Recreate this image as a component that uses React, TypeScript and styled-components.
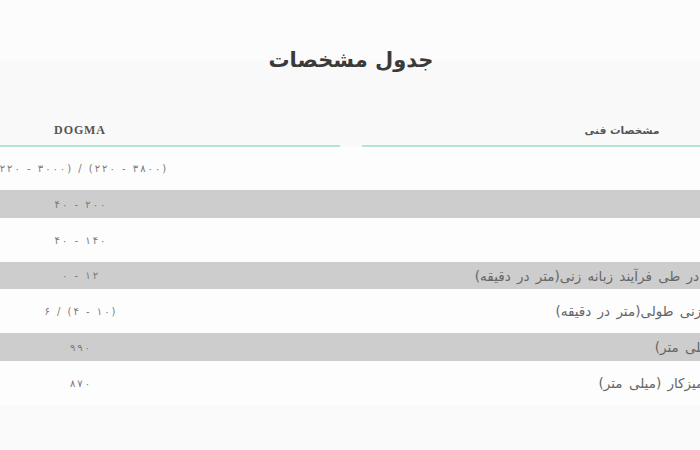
import React from "react";
import styled, { createGlobalStyle } from "styled-components";

const Global = createGlobalStyle`
  html, body {
    margin: 0;
    padding: 0;
    background: #fafafa;
    overflow: hidden;
  }
  body {
    font-family: "DejaVu Sans", "Noto Sans", sans-serif;
  }
`;

const Page = styled.div`
  width: 700px;
  height: 450px;
  overflow: hidden;
  background: linear-gradient(#fcfcfc 0, #fcfcfc 60px, #f9f9f9 61px, #fafafa 100%);
`;

const Sheet = styled.div`
  width: 1062px;
  margin-left: -180px;
  display: flex;
  flex-direction: column;
`;

const Title = styled.h2`
  margin: 45px 0 41px;
  height: 30px;
  line-height: 30px;
  text-align: center;
  direction: rtl;
  font-family: "DejaVu Sans", sans-serif;
  font-size: 21px;
  font-weight: 700;
  color: #3a3a3a;
`;

const Row = styled.div<{ $shade?: boolean; $h: number }>`
  display: grid;
  grid-template-columns: 520px 22px 520px;
  height: ${(p) => p.$h}px;
  align-items: center;
  background: ${(p) => (p.$shade ? "#cdcdcd" : "#fdfdfd")};
`;

const HeadRow = styled.div`
  display: grid;
  grid-template-columns: 520px 22px 520px;
  height: 31px;
`;

const HeadCell = styled.div<{ $serif?: boolean }>`
  border-bottom: 2px solid #b3e5cf;
  line-height: 29px;
  text-align: center;
  font-family: ${(p) =>
    p.$serif ? `"Liberation Serif", "DejaVu Serif", serif` : `"DejaVu Sans", sans-serif`};
  font-size: ${(p) => (p.$serif ? "12px" : "10.5px")};
  font-weight: 700;
  color: #555;
  direction: ${(p) => (p.$serif ? "ltr" : "rtl")};
  letter-spacing: ${(p) => (p.$serif ? "0.9px" : "0")};
`;

const Gap = styled.div``;

const Value = styled.div`
  text-align: center;
  direction: ltr;
  unicode-bidi: bidi-override;
  font-family: "DejaVu Sans", sans-serif;
  font-size: 10px;
  color: #7a7a7a;
  white-space: pre;
`;

const Label = styled.div`
  direction: rtl;
  text-align: right;
  padding-right: 102px;
  font-family: "DejaVu Sans", sans-serif;
  font-size: 13.5px;
  word-spacing: 2px;
  color: #666;
  white-space: nowrap;
`;

type Spec = { label: string; value: string; shade: boolean; h: number };

const specs: Spec[] = [
  { label: "توان (وات)", value: "(۲۲۰ - ۳۰۰۰) / (۲۲۰ - ۳۸۰۰)", shade: false, h: 43 },
  { label: "عمق شیار", value: "۴۰ - ۲۰۰", shade: true, h: 28 },
  { label: "عرض شیار", value: "۴۰ - ۱۴۰", shade: false, h: 44 },
  {
    label: "سرعت تغذیه در طی فرآیند زبانه زنی(متر در دقیقه)",
    value: "۰ - ۱۲",
    shade: true,
    h: 27,
  },
  {
    label: "سرعت شیار زنی طولی(متر در دقیقه)",
    value: "۶ / (۴ - ۱۰)",
    shade: false,
    h: 44,
  },
  { label: "ارتفاع کار (میلی متر)", value: "۹۹۰", shade: true, h: 28 },
  { label: "ارتفاع سطح میزکار (میلی متر)", value: "۸۷۰", shade: false, h: 44 },
];

// Persian digits belong to a cursive script, so letter-spacing is not applied;
// spread them with thin spaces instead.
const spread = (v: string) => v.split("").join("\u2009");

export default function App() {
  return (
    <Page>
      <Global />
      <Sheet>
        <Title>جدول مشخصات</Title>
        <HeadRow>
          <HeadCell $serif>DOGMA</HeadCell>
          <Gap />
          <HeadCell>مشخصات فنی</HeadCell>
        </HeadRow>
        {specs.map((s, i) => (
          <Row key={i} $shade={s.shade} $h={s.h}>
            <Value>{spread(s.value)}</Value>
            <Gap />
            <Label>{s.label}</Label>
          </Row>
        ))}
      </Sheet>
    </Page>
  );
}
